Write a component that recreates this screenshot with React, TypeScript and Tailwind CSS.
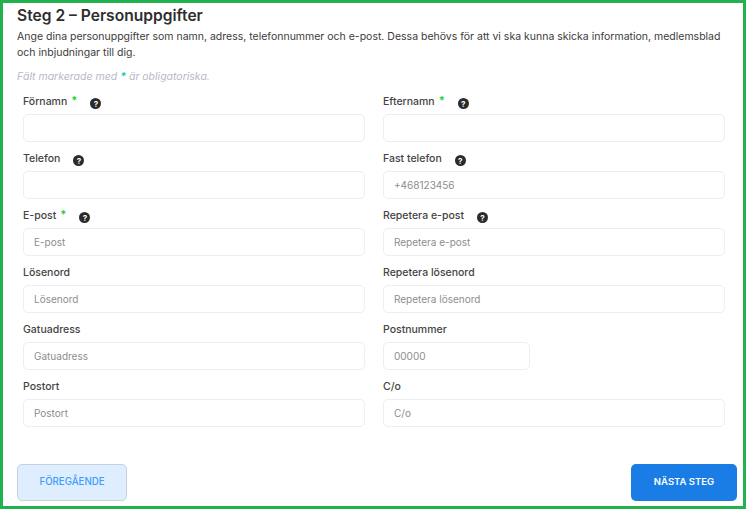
const fields = [
  { label: "Förnamn", required: true, help: true, placeholder: "" },
  { label: "Efternamn", required: true, help: true, placeholder: "" },
  { label: "Telefon", help: true, placeholder: "" },
  { label: "Fast telefon", help: true, placeholder: "+468123456" },
  { label: "E-post", required: true, help: true, placeholder: "E-post" },
  { label: "Repetera e-post", help: true, placeholder: "Repetera e-post" },
  { label: "Lösenord", placeholder: "Lösenord" },
  { label: "Repetera lösenord", placeholder: "Repetera lösenord" },
  { label: "Gatuadress", placeholder: "Gatuadress" },
  { label: "Postnummer", placeholder: "00000", short: true },
  { label: "Postort", placeholder: "Postort" },
  { label: "C/o", placeholder: "C/o" },
];

function HelpIcon() {
  return (
    <span className="ml-[13px] mt-[5px] flex h-[11px] w-[11px] items-center justify-center rounded-full bg-[#2b2b2b] text-[8px] font-bold leading-none text-white">
      ?
    </span>
  );
}

type FieldProps = {
  label: string;
  required?: boolean;
  help?: boolean;
  placeholder: string;
  short?: boolean;
};

function Field({ label, required, help, placeholder, short }: FieldProps) {
  return (
    <div className="flex h-[57px] flex-col">
      <div className="flex h-[21px] items-start">
        <label className="text-[10.5px] font-medium leading-[18px] text-[#444444]">{label}</label>
        {required && <span className="ml-[4px] text-[11px] font-bold leading-[14px] text-[#22d03c]">*</span>}
        {help && <HelpIcon />}
      </div>
      <input
        placeholder={placeholder}
        className={`h-[28px] rounded-[5px] border border-[#eceef4] bg-white px-[10px] text-[10px] outline-none placeholder:text-[#8d8d8d] ${
          short ? "w-[147px]" : "w-full"
        }`}
      />
    </div>
  );
}

export default function App() {
  return (
    <div className="flex h-[509px] w-[746px] flex-col border-[3px] border-[#22b14c] bg-white pl-[14px] pr-[6px] font-['Inter',sans-serif]">
      <h2 className="mt-[3px] text-[15.6px] font-semibold leading-[20px] text-[#2e2e2e]">Steg 2 – Personuppgifter</h2>
      <p className="mt-[3px] w-full text-[10.5px] leading-[16px] text-[#3c3c3c]">
        Ange dina personuppgifter som namn, adress, telefonnummer och e-post. Dessa behövs för att vi ska kunna skicka
        information, medlemsblad och inbjudningar till dig.
      </p>
      <p className="mt-[8px] text-[10.5px] italic leading-[16px] text-[#b9b9c6]">
        Fält markerade med <span className="font-bold text-[#19c9b4]">*</span> är obligatoriska.
      </p>
      <div className="mt-[8px] grid w-[708px] grid-cols-2 gap-x-[18px] pl-[6px]">
        {fields.map((f) => (
          <Field key={f.label} {...f} />
        ))}
      </div>
      <div className="mt-[29px] flex justify-between">
        <button className="h-[37px] w-[110px] rounded-[5px] border border-[#c5d0e0] bg-[#deeeff] text-[9.7px] font-medium text-[#3f9bff]">
          FÖREGÅENDE
        </button>
        <button className="h-[37px] w-[106px] rounded-[5px] bg-[#1a7de6] text-[9.5px] font-semibold text-white">
          NÄSTA STEG
        </button>
      </div>
    </div>
  );
}
